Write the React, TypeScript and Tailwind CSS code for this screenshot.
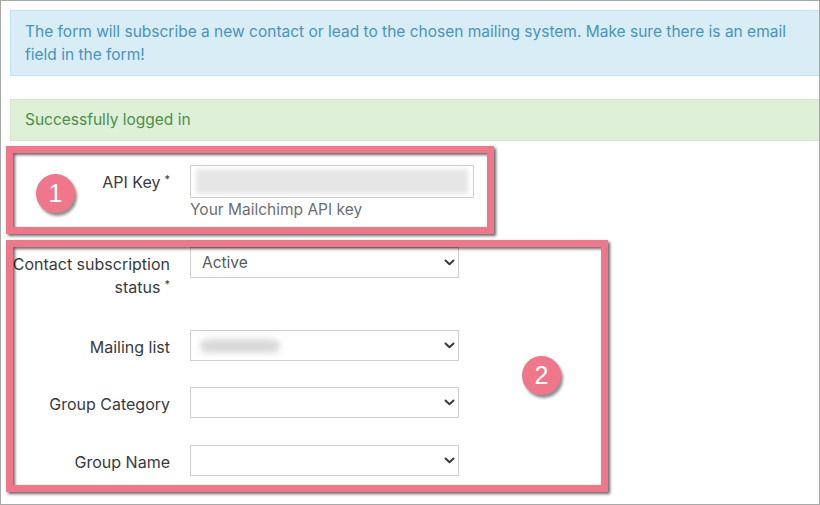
import React from 'react';

interface FieldRow {
    id: string;
    label: React.ReactNode;
    value?: string;
    blurred?: boolean;
    mt: string;
}

function Req() {
    return <span className="inline-block align-top ml-[4px] mt-[3px] text-[11px] leading-[11px]">*</span>;
}

function Chevron() {
    return (
        <svg width="11" height="7" viewBox="0 0 11 7" className="shrink-0">
            <path d="M1.5 1.5 L5.5 5.2 L9.5 1.5" fill="none" stroke="#3a3a3a" strokeWidth="2" strokeLinecap="round" strokeLinejoin="round" />
        </svg>
    );
}

function SelectBox({ value, blurred }: { value?: string; blurred?: boolean }) {
    return (
        <div className="w-[269px] h-[31px] border border-[#cfcfcf] bg-white flex items-center justify-between pl-[11px] pr-[3px]">
            {blurred ? (
                <div className="w-[80px] h-[14px] ml-[-2px] rounded-full bg-[#d9d9d9] blur-[3px]" />
            ) : (
                <span className="text-[15.5px] leading-[20px] text-[#555a5f]">{value}</span>
            )}
            <Chevron />
        </div>
    );
}

function Badge({ n, className }: { n: string; className: string }) {
    return (
        <div
            className={`absolute w-[39px] h-[39px] rounded-full bg-[#f07689] shadow-[2px_3px_3px_rgba(0,0,0,0.45)] flex items-center justify-center text-white text-[25px] leading-none font-['Liberation_Sans',Arial,sans-serif] ${className}`}
        >
            {n}
        </div>
    );
}

export default function App() {
    const rows: FieldRow[] = [
        {
            id: 'status',
            label: (
                <>
                    Contact subscription status<Req />
                </>
            ),
            value: 'Active',
            mt: 'mt-[27px]'
        },
        { id: 'list', label: 'Mailing list', blurred: true, mt: 'mt-[31px]' },
        { id: 'category', label: 'Group Category', mt: 'mt-[26px]' },
        { id: 'name', label: 'Group Name', mt: 'mt-[27px]' }
    ];

    return (
        <div className="w-[820px] h-[505px] bg-white">
            <div className="relative w-[820px] h-[505px] border border-[#a8a8a8] overflow-hidden pt-[9px] pl-[9px] font-['Inter',sans-serif]">
                {/* Alerts */}
                <div className="border border-r-0 border-[#bfe5f2] bg-[#d9edf7] px-[14px] py-[9px] text-[15.5px] leading-[23px] text-[#4794c0]">
                    The form will subscribe a new contact or lead to the chosen mailing system. Make sure there is an email field in the form!
                </div>
                <div className="mt-[23px] border border-r-0 border-[#d3eac8] bg-[#dff0d8] px-[14px] py-[9px] text-[15.5px] leading-[22px] text-[#4b8f4b]">
                    Successfully logged in
                </div>

                {/* Form */}
                <div className="text-[#383b3e]">
                    <div className="mt-[24px] flex items-start gap-[20px]">
                        <div className="w-[160px] text-right pt-[6px] text-[16px] leading-[23px]">
                            API Key<Req />
                        </div>
                        <div>
                            <div className="w-[284px] h-[33px] border border-[#cfcfcf] bg-white px-[5px] py-[3px]">
                                <div className="w-full h-full bg-[#e6e6e6] blur-[2px]" />
                            </div>
                            <div className="mt-[2px] text-[15.5px] leading-[20px] text-[#6b6f73]">Your Mailchimp API key</div>
                        </div>
                    </div>

                    {rows.map((row) => (
                        <div key={row.id} className={`${row.mt} flex items-start gap-[20px]`}>
                            <div className="w-[160px] text-right pt-[6px] text-[16px] leading-[23px]">{row.label}</div>
                            <SelectBox value={row.value} blurred={row.blurred} />
                        </div>
                    ))}
                </div>

                {/* Annotation frames */}
                <div className="absolute left-[5px] top-[145px] w-[488px] h-[88px] border-[7px] border-[#f07689] drop-shadow-[2px_2px_1.5px_rgba(0,0,0,0.6)] pointer-events-none" />
                <div className="absolute left-[5px] top-[239px] w-[602px] h-[252px] border-[7px] border-[#f07689] drop-shadow-[2px_2px_1.5px_rgba(0,0,0,0.6)] pointer-events-none" />
                <Badge n="1" className="left-[35px] top-[173px]" />
                <Badge n="2" className="left-[521px] top-[355px]" />
            </div>
        </div>
    );
}
